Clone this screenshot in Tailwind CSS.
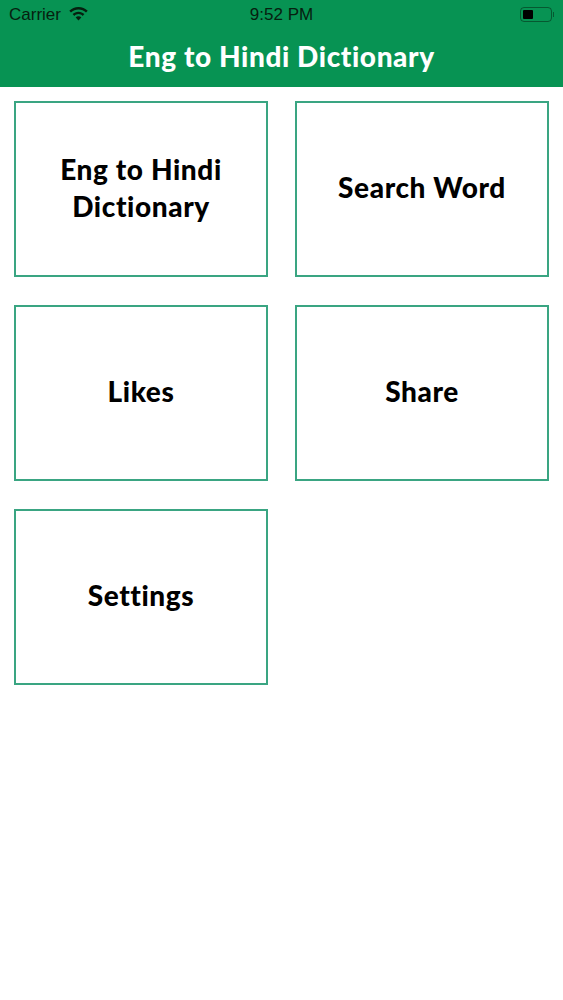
<!DOCTYPE html>
<html lang="en">
<head>
  <meta charset="utf-8"/>
  <meta name="viewport" content="width=device-width, initial-scale=1.0"/>
  <title>Eng to Hindi Dictionary</title>
  <script src="https://cdn.jsdelivr.net/npm/@tailwindcss/browser@4"></script>
</head>
<body class="bg-white font-['Lato',sans-serif] text-black [font-variant-ligatures:none]">

<header class="h-[87px] bg-[#079353]">
  <div class="relative flex h-[29px] items-center justify-between pl-[9px] pr-[9px] font-['Liberation_Sans',sans-serif] text-[17px] text-[#06200f]">
    <div class="flex items-center gap-[8px]">
      <span>Carrier</span>
      <svg class="w-[19px] h-[14px] mb-[1px]" viewBox="0 0 19 14" fill="#06200f">
        <path d="M9.5 0C5.9 0 2.7 1.400.3 3.700l1.700 1.800C4 3.600 6.600 2.400 9.500 2.400s5.500 1.200 7.500 3.100l1.700-1.800C16.300 1.400 13.100 0 9.500 0z"/>
        <path d="M9.500 4.700c-2.300 0-4.400.9-5.900 2.400l1.700 1.800c1.100-1.100 2.600-1.800 4.200-1.800s3.100.7 4.200 1.800l1.700-1.800c-1.500-1.500-3.600-2.400-5.900-2.400z"/>
        <path d="M9.500 9.300c-1.100 0-2.100.4-2.800 1.100l2.800 3 2.800-3c-.7-.7-1.700-1.100-2.800-1.100z"/>
      </svg>
    </div>
    <span class="absolute left-1/2 -translate-x-1/2 whitespace-nowrap">9:52 PM</span>
    <div class="flex items-center">
      <div class="flex h-[15px] w-[32px] items-center rounded-[4px] border border-[#06200f]/50 p-[2px]">
        <div class="h-[9px] w-[10px] rounded-[1px] bg-black"></div>
      </div>
      <div class="ml-[1px] h-[5px] w-[1px] bg-[#06200f]/50"></div>
    </div>
  </div>
  <h1 class="text-center text-[28px] leading-[54px] tracking-[0.6px] font-black text-white">Eng to Hindi Dictionary</h1>
</header>

<main class="grid grid-cols-[254px_254px] gap-x-[27px] gap-y-[28px] px-[14px] pt-[14px]">
  <a class="flex h-[176px] items-center justify-center border-2 border-[#3aa582] px-4 pb-[2px] text-center text-[28px] leading-[37px] tracking-[0.6px] font-black">Eng to Hindi Dictionary</a>
  <a class="flex h-[176px] items-center justify-center border-2 border-[#3aa582] px-4 pb-[4px] text-center text-[28px] leading-[37px] tracking-[0.6px] font-black">Search Word</a>
  <a class="flex h-[176px] items-center justify-center border-2 border-[#3aa582] px-4 pb-[4px] text-center text-[28px] leading-[37px] tracking-[0.6px] font-black">Likes</a>
  <a class="flex h-[176px] items-center justify-center border-2 border-[#3aa582] px-4 pb-[4px] text-center text-[28px] leading-[37px] tracking-[0.6px] font-black">Share</a>
  <a class="flex h-[176px] items-center justify-center border-2 border-[#3aa582] px-4 pb-[4px] text-center text-[28px] leading-[37px] tracking-[0.6px] font-black">Settings</a>
</main>

</body>
</html>
